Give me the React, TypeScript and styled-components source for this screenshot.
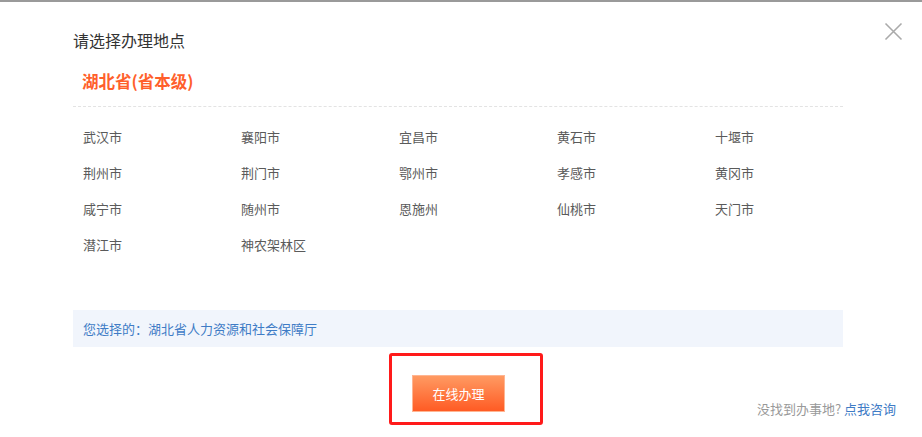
import React from "react";
import styled, { createGlobalStyle } from "styled-components";

const GlobalStyle = createGlobalStyle`
  html, body { margin: 0; padding: 0; background: #fff; }
  body {
    font-family: "Microsoft YaHei", "Noto Sans CJK SC", "Noto Sans", sans-serif;
  }
`;

const Page = styled.div`
  position: relative;
  width: 922px;
  height: 437px;
  box-sizing: border-box;
  border-top: 2px solid #9a9a9a;
  background: #fff;
  overflow: hidden;
`;

const CloseButton = styled.button`
  position: absolute;
  top: 20px;
  right: 19px;
  width: 19px;
  height: 19px;
  padding: 0;
  border: 0;
  background: transparent;
  cursor: pointer;
  display: flex;
  align-items: center;
  justify-content: center;
`;

const Content = styled.div`
  width: 770px;
  margin-left: 73px;
`;

const Title = styled.h2`
  margin: 28px 0 0;
  font-size: 16px;
  line-height: 20px;
  font-weight: normal;
  color: #333;
`;

const Province = styled.div`
  margin-top: 19px;
  padding: 0 0 13px 9px;
  font-size: 16.5px;
  line-height: 24px;
  font-weight: bold;
  color: #ff5f2b;
  border-bottom: 1px dashed #e3e3e3;
`;

const CityGrid = styled.ul`
  list-style: none;
  margin: 12px 0 0;
  padding: 0 0 0 10px;
  display: grid;
  grid-template-columns: repeat(5, 158px);
  grid-auto-rows: 36px;
`;

const City = styled.li`
  font-size: 13px;
  line-height: 36px;
  color: #5a5a5a;
  cursor: pointer;
`;

const Selected = styled.div`
  margin-top: 47px;
  height: 37px;
  padding-left: 10px;
  background: #f1f5fc;
  font-size: 13px;
  line-height: 37px;
  color: #3f7cc6;
`;

const BottomRow = styled.div`
  display: flex;
  align-items: flex-start;
  justify-content: space-between;
  margin-top: 6px;
  padding: 0 26px 0 389px;
`;

const Highlight = styled.div`
  box-sizing: border-box;
  width: 154px;
  height: 72px;
  padding: 19px 0 0 20px;
  border: 3px solid #ff1a1a;
  border-radius: 3px;
`;

const PrimaryButton = styled.button`
  width: 93px;
  height: 37px;
  padding: 0;
  border: 1px solid #ffb592;
  background: linear-gradient(to bottom, #ff9a62, #ff5b24);
  color: #fff;
  font-family: inherit;
  font-size: 13px;
  line-height: 35px;
  cursor: pointer;
`;

const Help = styled.div`
  margin-top: 47px;
  font-size: 13px;
  line-height: 18px;
  color: #999;
`;

const HelpLink = styled.a`
  color: #3f7cc6;
  text-decoration: none;
`;

const cities = [
  "武汉市", "襄阳市", "宜昌市", "黄石市", "十堰市",
  "荆州市", "荆门市", "鄂州市", "孝感市", "黄冈市",
  "咸宁市", "随州市", "恩施州", "仙桃市", "天门市",
  "潜江市", "神农架林区",
];

export default function App() {
  return (
    <>
      <GlobalStyle />
      <Page>
        <CloseButton aria-label="关闭">
          <svg width="19" height="19" viewBox="0 0 19 19">
            <path d="M1.5 1.5 L17.5 17.5 M17.5 1.5 L1.5 17.5" stroke="#aaa" strokeWidth="1.6" fill="none" />
          </svg>
        </CloseButton>
        <Content>
          <Title>请选择办理地点</Title>
          <Province>湖北省(省本级)</Province>
          <CityGrid>
            {cities.map((c) => (
              <City key={c}>{c}</City>
            ))}
          </CityGrid>
          <Selected>您选择的：湖北省人力资源和社会保障厅</Selected>
        </Content>
        <BottomRow>
          <Highlight>
            <PrimaryButton>在线办理</PrimaryButton>
          </Highlight>
          <Help>
            没找到办事地? <HelpLink href="#">点我咨询</HelpLink>
          </Help>
        </BottomRow>
      </Page>
    </>
  );
}
